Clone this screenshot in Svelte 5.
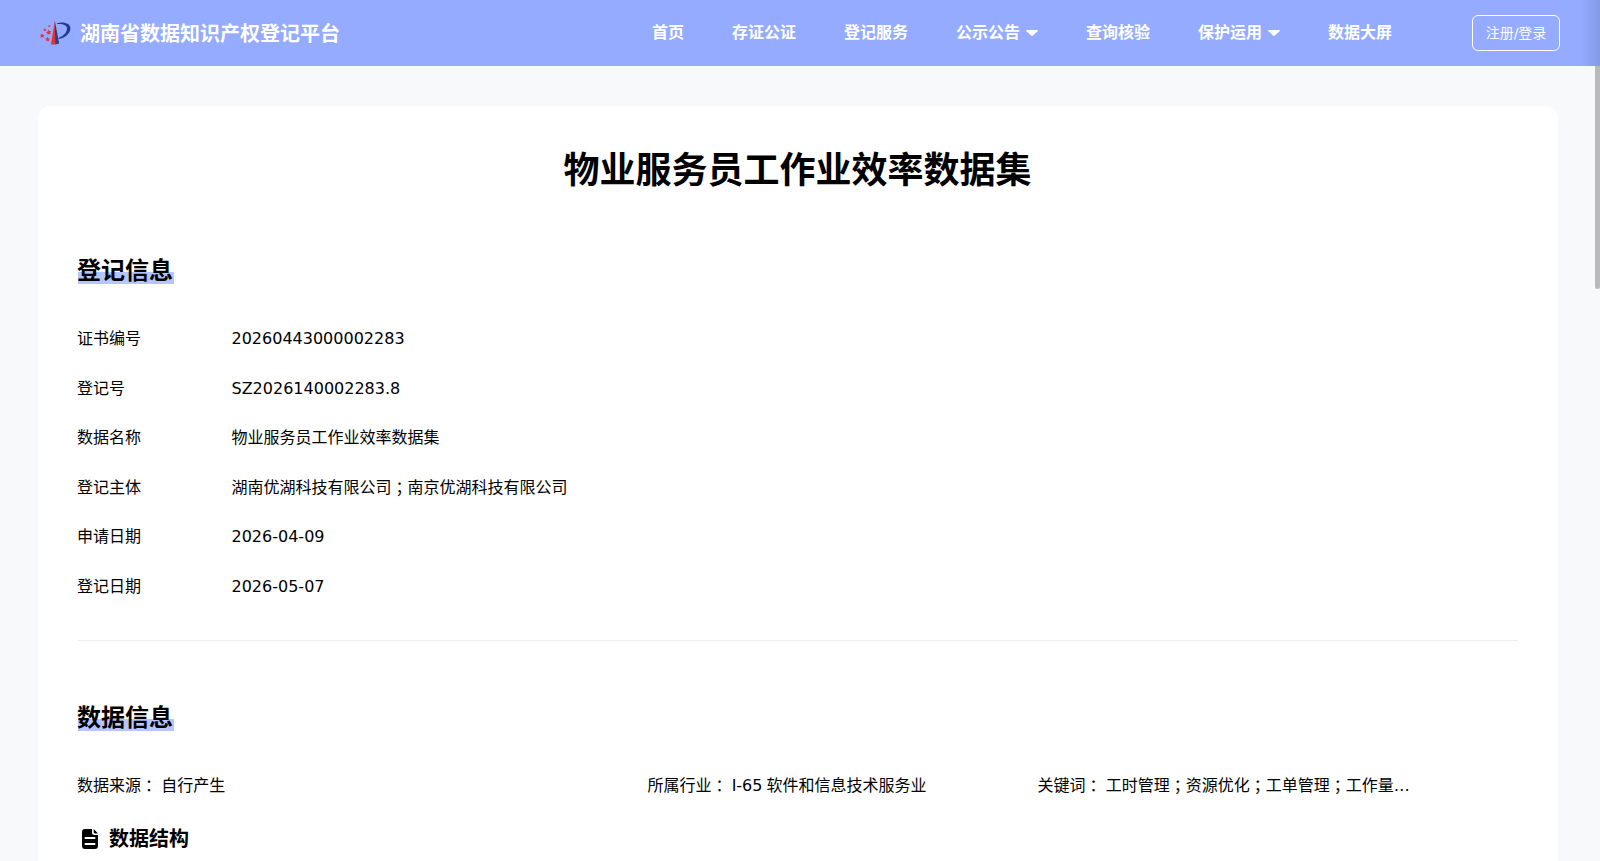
<script lang="ts">
	const nav = [
		{ label: '首页', sub: false },
		{ label: '存证公证', sub: false },
		{ label: '登记服务', sub: false },
		{ label: '公示公告', sub: true },
		{ label: '查询核验', sub: false },
		{ label: '保护运用', sub: true },
		{ label: '数据大屏', sub: false },
	];

	const info = [
		{ label: '证书编号', value: '20260443000002283' },
		{ label: '登记号', value: 'SZ2026140002283.8' },
		{ label: '数据名称', value: '物业服务员工作业效率数据集' },
		{ label: '登记主体', value: '湖南优湖科技有限公司；南京优湖科技有限公司' },
		{ label: '申请日期', value: '2026-04-09' },
		{ label: '登记日期', value: '2026-05-07' },
	];

	const meta = [
		{ label: '数据来源：', value: '自行产生' },
		{ label: '所属行业：', value: 'I-65 软件和信息技术服务业' },
		{ label: '关键词：', value: '工时管理；资源优化；工单管理；工作量…' },
	];
</script>

<!-- full-width colons and semicolons sit in the middle of their cell -->
{#snippet text(s: string)}{#each s.split(/([：；])/) as part}{#if part === '：' || part === '；'}<span class="punct">{part}</span>{:else}{part}{/if}{/each}{/snippet}

<div class="page">
	<header>
		<div class="brand">
			<svg class="logo" width="32" height="26" viewBox="0 0 32 26">
				<path d="M14.8 0.5 L15.2 24.5 H11 Z" fill="#e5322f" />
				<path d="M14.8 0.5 L19.2 23.5 L15.2 24.5 Z" fill="#2a3f8c" />
				<path d="M17 3.2 C24 1.4 30.8 3.6 30.4 8.8 C30 14 24.5 18 19 19 L18.6 18 C23.5 16 27 12.5 27 8.6 C27 5 23 3.6 17 4 Z" fill="#1f3c93" />
				<g fill="#e5332f">
					<path d="M8.6 9.6 L9.5 11.2 11.4 11 10.2 12.6 11 14.4 9.1 13.8 7.6 15.1 7.5 13.2 5.8 12.2 7.7 11.6 Z" />
					<path d="M7.5 16.8 L8.3 18.4 10.2 18.5 8.9 19.8 9.3 21.6 7.7 20.8 6.1 21.6 6.5 19.8 5.2 18.6 6.9 18.3 Z" />
					<path d="M2 13.4 L2.8 14.8 4.5 14.9 3.4 16.1 3.7 17.8 2.1 17 .6 17.8 .9 16.1 -.2 14.9 1.3 14.7 Z" />
					<path d="M4.6 8.6 L5.8 9 6.4 10.2 4.8 11 3.4 10 Z" />
					<path d="M8.2 5.4 L10.4 5.4 9.9 7 8.6 7 Z" />
				</g>
			</svg>
			<span class="name">湖南省数据知识产权登记平台</span>
		</div>
		<nav>
			{#each nav as item}
				<span class="nav-item">
					{item.label}
					{#if item.sub}
						<svg width="12" height="6" viewBox="0 0 12 6"><path d="M0.7 0 H11.3 Q12.3 .4 11.5 1.2 L7 5.4 Q6 6.2 5 5.4 L.5 1.2 Q-.3 .4 .7 0 Z" fill="#fff" /></svg>
					{/if}
				</span>
			{/each}
		</nav>
		<button class="login">注册/登录</button>
	</header>
	<div class="scrollbar"></div>

	<main>
		<h1>物业服务员工作业效率数据集</h1>

		<section>
			<h2>登记信息</h2>
			<dl>
				{#each info as row}
					<div class="row">
						<dt>{row.label}</dt>
						<dd>{@render text(row.value)}</dd>
					</div>
				{/each}
			</dl>
		</section>

		<section>
			<h2>数据信息</h2>
			<div class="meta">
				{#each meta as m}
					<div>{@render text(m.label)} {@render text(m.value)}</div>
				{/each}
			</div>
			<h3>
				<svg width="16" height="20" viewBox="0 0 16 20">
					<path fill-rule="evenodd" d="M3 0 H10 V3.5 Q10 6 12.5 6 H16 V17 Q16 20 13 20 H3 Q0 20 0 17 V3 Q0 0 3 0 Z M3.5 8 Q2.5 8 2.5 9 T3.5 10 H12.5 Q13.5 10 13.5 9 T12.5 8 Z M3.5 14 Q2.5 14 2.5 15 T3.5 16 H12.5 Q13.5 16 13.5 15 T12.5 14 Z" />
					<path d="M11.7 0 L16 4.4 H13 Q11.7 4.4 11.7 3 Z" />
				</svg>
				数据结构
			</h3>
		</section>
	</main>
</div>

<style>
	:global(body) {
		overflow: hidden;
	}
	.page {
		height: 861px;
		overflow: hidden;
		background: #f8f9fb;
		color: #000;
		font-family: 'DejaVu Sans', 'Noto Sans CJK SC', sans-serif;
		font-size: 16px;
	}
	.punct {
		font-family: 'Noto Sans CJK TC', sans-serif;
		line-height: 1;
		vertical-align: -1px;
	}
	header {
		display: flex;
		align-items: center;
		box-sizing: border-box;
		height: 66px;
		padding: 0 40px;
		color: #fff;
		background: linear-gradient(90deg, transparent calc(100% - 20px), rgba(70, 90, 150, 0.2)), #94abff;
	}
	.brand {
		display: flex;
		align-items: center;
		width: 612px;
	}
	.logo {
		overflow: visible;
	}
	.name {
		margin-left: 8px;
		padding-bottom: 1px;
		font-size: 20px;
		font-weight: 700;
		font-family: 'Noto Sans CJK SC', sans-serif;
		line-height: 26px;
	}
	nav {
		display: flex;
		flex: 1;
		gap: 48px;
		font-weight: 700;
	}
	.nav-item {
		display: flex;
		align-items: center;
		gap: 6px;
		line-height: 24px;
		white-space: nowrap;
	}
	.login {
		width: 88px;
		height: 36px;
		padding: 0 0 2px;
		border: 1px solid #fff;
		border-radius: 6px;
		background: none;
		color: #fff;
		font-family: inherit;
		font-size: 14px;
	}
	.scrollbar {
		position: absolute;
		top: 66px;
		right: 0;
		width: 5px;
		height: 223px;
		border-radius: 0 0 3px 3px;
		background: #b8babc;
	}
	main {
		box-sizing: border-box;
		width: 1520px;
		height: 900px;
		margin: 40px 0 0 38px;
		padding: 40px;
		border-radius: 12px;
		background: #fff;
		text-indent: -1px;
	}
	h1 {
		margin: 0;
		padding-top: 1px;
		font-size: 36px;
		line-height: 48px;
		text-align: center;
	}
	h2 {
		width: fit-content;
		margin: 0;
		padding-right: 1px;
		font-size: 24px;
		line-height: 32px;
		background: linear-gradient(#b6c4ff, #b6c4ff) 0 17px / 100% 12px no-repeat;
	}
	section {
		padding-top: 61px;
	}
	h1 + section {
		padding-top: 60px;
	}
	dl {
		margin: 27.3px 0 0;
		padding-bottom: 27.7px;
		border-bottom: 1px solid #eee;
	}
	.row {
		display: flex;
		height: 49.6px;
		align-items: center;
		line-height: 24px;
	}
	dt {
		width: 154.5px;
	}
	dd {
		margin: 0;
	}
	.meta {
		display: grid;
		grid-template-columns: 570.5px 390px 1fr;
		margin-top: 40px;
		line-height: 24px;
		word-spacing: -1px;
	}
	h3 {
		display: flex;
		align-items: center;
		gap: 12px;
		margin: 27px 0 0;
		padding-left: 4px;
		font-size: 20px;
		line-height: 28px;
	}
</style>
